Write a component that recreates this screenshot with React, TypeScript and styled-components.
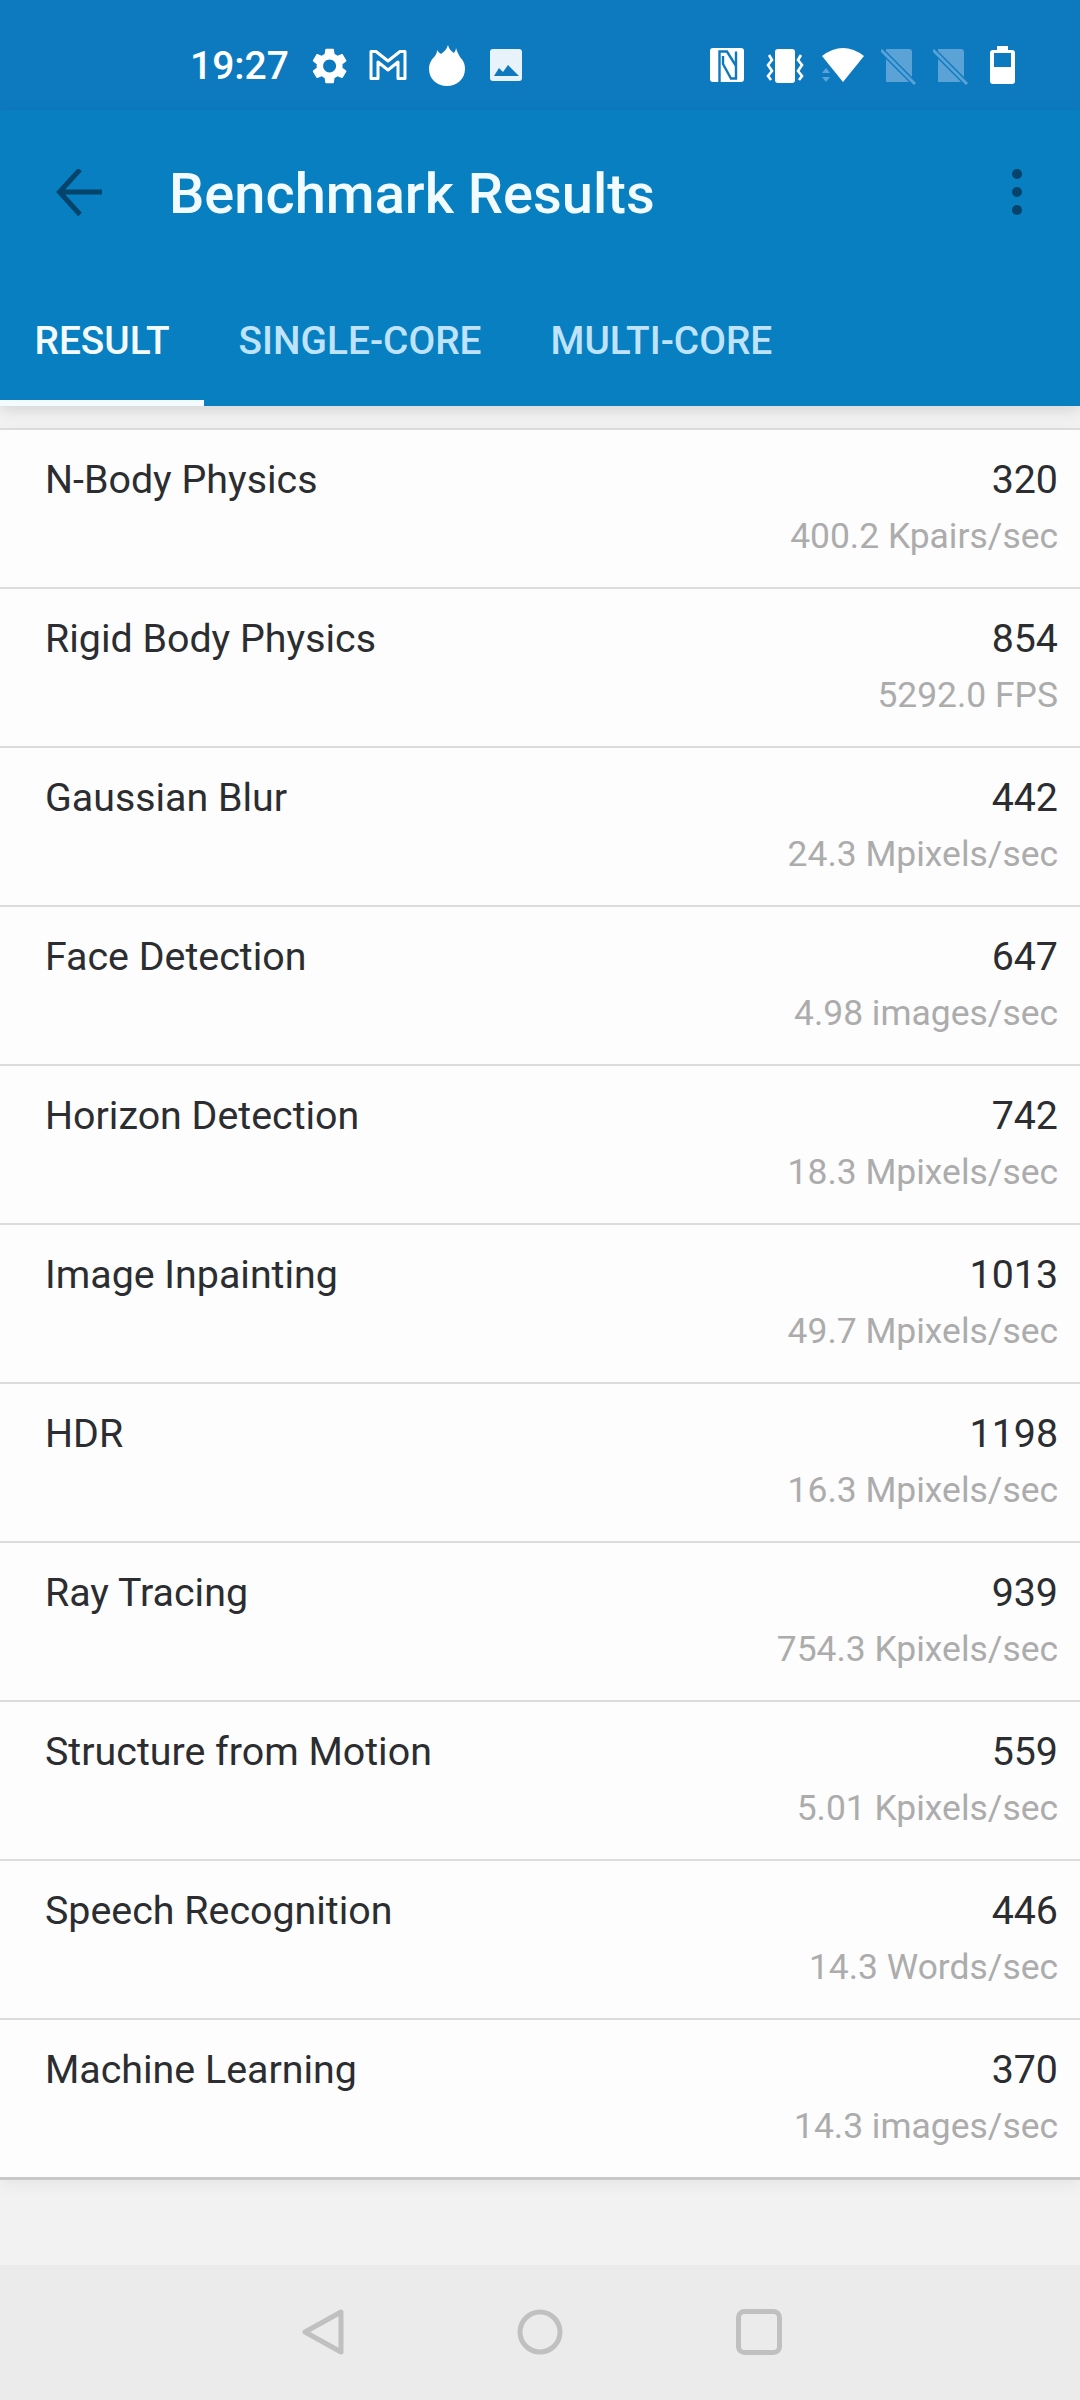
import styled, { createGlobalStyle } from "styled-components";

const GlobalStyle = createGlobalStyle`
  html, body {
    margin: 0;
    padding: 0;
    background: #f2f2f2;
  }
`;

const Page = styled.div`
  display: flex;
  flex-direction: column;
  width: 1080px;
  height: 2400px;
  overflow: hidden;
  font-family: Roboto, "Liberation Sans", sans-serif;
  background: #f2f2f2;
`;

// Статус-бар
const StatusBar = styled.div`
  display: flex;
  justify-content: space-between;
  box-sizing: border-box;
  height: 110px;
  padding: 44px 65px 0 190px;
  background: #0d7ac0;
`;

const StatusGroup = styled.div<{ $gap: number }>`
  display: flex;
  align-items: flex-start;
  gap: ${(p) => p.$gap}px;
`;

const Clock = styled.span`
  margin-right: 1px;
  font-size: 39px;
  font-weight: 500;
  line-height: 44px;
  color: #ffffff;
`;

const Header = styled.header`
  position: relative;
  z-index: 1;
  background: #077fc0;
  box-shadow: 0 4px 14px rgba(0, 0, 0, 0.12);
`;

const TitleRow = styled.div`
  display: flex;
  align-items: center;
  box-sizing: border-box;
  height: 168px;
  padding: 0 57px 0 54px;
`;

const Title = styled.h1`
  flex: 1;
  margin: 0 0 0 63px;
  font-size: 56px;
  font-weight: 500;
  line-height: 64px;
  color: #f2fbff;
`;

const Tabs = styled.div`
  display: flex;
  height: 128px;
`;

const Tab = styled.div<{ $active?: boolean }>`
  display: flex;
  align-items: center;
  box-sizing: border-box;
  padding: 2px 34.5px 0;
  font-size: 38.8px;
  font-weight: 500;
  color: ${(p) => (p.$active ? "#f4fbff" : "#bfe3fb")};
  border-bottom: 6px solid ${(p) => (p.$active ? "#f4fbff" : "transparent")};
`;

const List = styled.main`
  flex: 1;
  padding-top: 22px;
`;

const Results = styled.div`
  background: #fdfdfd;
  border-bottom: 3px solid #c8c8c8;
  box-shadow: 0 4px 16px rgba(0, 0, 0, 0.06);
`;

const Row = styled.div`
  display: flex;
  justify-content: space-between;
  box-sizing: border-box;
  height: 159px;
  padding: 28px 22px 0 45px;
  border-top: 2px solid #dcdcdc;
`;

const RowName = styled.span`
  font-size: 39.375px;
  line-height: 44px;
  color: #2b2d30;
`;

const RowValues = styled.div`
  display: flex;
  flex-direction: column;
  align-items: flex-end;
  gap: 12px;
`;

const Score = styled.span`
  font-size: 39.375px;
  line-height: 44px;
  color: #2b2d30;
`;

const Rate = styled.span`
  font-size: 35.44px;
  line-height: 44px;
  color: #acacac;
`;

const NavBar = styled.nav`
  display: flex;
  justify-content: center;
  align-items: flex-start;
  gap: 173px;
  box-sizing: border-box;
  height: 135px;
  padding-top: 44px;
  background: #ebebeb;
`;

const results = [
  { name: "N-Body Physics", score: "320", rate: "400.2 Kpairs/sec" },
  { name: "Rigid Body Physics", score: "854", rate: "5292.0 FPS" },
  { name: "Gaussian Blur", score: "442", rate: "24.3 Mpixels/sec" },
  { name: "Face Detection", score: "647", rate: "4.98 images/sec" },
  { name: "Horizon Detection", score: "742", rate: "18.3 Mpixels/sec" },
  { name: "Image Inpainting", score: "1013", rate: "49.7 Mpixels/sec" },
  { name: "HDR", score: "1198", rate: "16.3 Mpixels/sec" },
  { name: "Ray Tracing", score: "939", rate: "754.3 Kpixels/sec" },
  { name: "Structure from Motion", score: "559", rate: "5.01 Kpixels/sec" },
  { name: "Speech Recognition", score: "446", rate: "14.3 Words/sec" },
  { name: "Machine Learning", score: "370", rate: "14.3 images/sec" },
];

const BAR = "#0d7ac0";
const DIM = "#5ba3d6";

function SimOff() {
  return (
    <svg width="35" height="44" viewBox="0 0 35 44">
      <path d="M5 5H28C30 5 31 6 31 8V38H5Z" fill={DIM} />
      <path d="M0 6L34 40" stroke={BAR} strokeWidth="5.5" />
      <path d="M0 6L34 40" stroke={DIM} strokeWidth="3" />
    </svg>
  );
}

function StatusIcons() {
  return (
    <StatusGroup $gap={22}>
      <Clock>19:27</Clock>
      <svg width="35" height="44" viewBox="0 0 35 44">
        <g transform="translate(-4 0.4) scale(1.8)">
          <path
            fill="#fff"
            d="M19.14 12.94c.04-.3.06-.61.06-.94 0-.32-.02-.64-.07-.94l2.03-1.58c.18-.14.23-.41.12-.61l-1.92-3.32c-.12-.22-.37-.29-.59-.22l-2.39.96c-.5-.38-1.03-.7-1.62-.94l-.36-2.54c-.04-.24-.24-.41-.48-.41h-3.84c-.24 0-.43.17-.47.41l-.36 2.54c-.59.24-1.13.57-1.62.94l-2.39-.96c-.22-.08-.47 0-.59.22L2.74 8.87c-.12.21-.08.47.12.61l2.03 1.58c-.05.3-.09.63-.09.94s.02.64.07.94l-2.03 1.58c-.18.14-.23.41-.12.61l1.92 3.32c.12.22.37.29.59.22l2.39-.96c.5.38 1.03.7 1.62.94l.36 2.54c.05.24.24.41.48.41h3.84c.24 0 .44-.17.47-.41l.36-2.54c.59-.24 1.13-.56 1.62-.94l2.39.96c.22.08.47 0 .59-.22l1.92-3.32c.12-.22.07-.47-.12-.61l-2.01-1.58zM12 15.6c-1.98 0-3.6-1.62-3.6-3.6s1.62-3.6 3.6-3.6 3.6 1.62 3.6 3.6-1.62 3.6-3.6 3.6z"
          />
        </g>
      </svg>
      <svg width="38" height="44" viewBox="0 0 38 44">
        <path
          d="M2 34.5V7.5H7L19 17L31 7.5H36V34.5H29V18L19 26L9 18V34.5Z"
          fill="none"
          stroke="#fff"
          strokeWidth="3"
          strokeLinejoin="round"
        />
      </svg>
      <svg width="37" height="44" viewBox="0 0 37 44">
        <path
          fill="#fff"
          d="M19 1C20 5 22 7 25 9C26 7 27 6 27 4C28 8 30 11 31 13C35 17 36 21 36 25C36 35 28 42 18 42C8 42 0 35 0 25C0 19 3 15 6 12C7 10 8 9 8 6C9 8 11 9 12 10C15 8 18 5 19 1Z"
        />
      </svg>
      <svg width="34" height="44" viewBox="0 0 34 44">
        <rect x="2" y="5" width="32" height="32" rx="3" fill="#e8f2fa" />
        <path d="M6 32L11 24L15 28L20 21L31 32Z" fill={BAR} />
      </svg>
    </StatusGroup>
  );
}

function SystemIcons() {
  return (
    <StatusGroup $gap={17}>
      <svg width="34" height="44" viewBox="0 0 34 44">
        <rect x="0" y="4" width="34" height="34" rx="3" fill="#fff" />
        <path
          d="M9.5 38V7.5H17L26 22V7.5V34.5H21L13 20V12"
          fill="none"
          stroke={BAR}
          strokeWidth="2.4"
        />
      </svg>
      <svg width="44" height="44" viewBox="0 0 44 44">
        <rect x="14" y="5" width="20" height="34" rx="3" fill="#fff" />
        <path
          d="M8 11L11 16L7 21L11 27L7 32L10 36"
          fill="none"
          stroke="#fff"
          strokeWidth="2.6"
        />
        <path
          d="M40 11L37 16L41 21L37 27L41 32L38 36"
          fill="none"
          stroke="#fff"
          strokeWidth="2.6"
        />
      </svg>
      <svg width="42" height="44" viewBox="0 0 42 44">
        <path d="M21 38L0 12Q21 -4 42 12Z" fill="#fff" />
        <path d="M4 24L8 29H0Z M0 33H8L4 38Z" fill={DIM} />
      </svg>
      <SimOff />
      <SimOff />
      <svg width="30" height="44" viewBox="0 0 30 44">
        <path
          fill="#fff"
          d="M12 2H23V6H27C29 6 30 7 30 9V37C30 39 29 40 27 40H8C6 40 5 39 5 37V9C5 7 6 6 8 6H12Z"
        />
        <rect x="9" y="9" width="17" height="14" fill={BAR} />
      </svg>
    </StatusGroup>
  );
}

function App() {
  return (
    <Page>
      <GlobalStyle />
      <StatusBar>
        <StatusIcons />
        <SystemIcons />
      </StatusBar>
      <Header>
        <TitleRow>
          <svg width="52" height="50" viewBox="0 2 52 50">
            <path
              d="M48 25H6M26 2.5L5.5 25L26 47.5"
              fill="none"
              stroke="#04436b"
              strokeWidth="5"
            />
          </svg>
          <Title>Benchmark Results</Title>
          <svg width="12" height="50" viewBox="0 2 12 50">
            <circle cx="6" cy="7" r="5" fill="#04436b" />
            <circle cx="6" cy="25" r="5" fill="#04436b" />
            <circle cx="6" cy="43" r="5" fill="#04436b" />
          </svg>
        </TitleRow>
        <Tabs>
          <Tab $active>RESULT</Tab>
          <Tab>SINGLE-CORE</Tab>
          <Tab>MULTI-CORE</Tab>
        </Tabs>
      </Header>
      <List>
        <Results>
          {results.map((r) => (
            <Row key={r.name}>
              <RowName>{r.name}</RowName>
              <RowValues>
                <Score>{r.score}</Score>
                <Rate>{r.rate}</Rate>
              </RowValues>
            </Row>
          ))}
        </Results>
      </List>
      <NavBar>
        <svg width="46" height="46" viewBox="0 0 46 46">
          <path
            d="M43 3V43L7 23Z"
            fill="none"
            stroke="#c0c0c0"
            strokeWidth="5"
            strokeLinejoin="round"
          />
        </svg>
        <svg width="46" height="46" viewBox="0 0 46 46">
          <circle cx="23" cy="23" r="20" fill="none" stroke="#c0c0c0" strokeWidth="5" />
        </svg>
        <svg width="46" height="46" viewBox="0 0 46 46">
          <rect
            x="2.5"
            y="2.5"
            width="41"
            height="41"
            rx="6"
            fill="none"
            stroke="#c0c0c0"
            strokeWidth="5"
          />
        </svg>
      </NavBar>
    </Page>
  );
}

export default App;
